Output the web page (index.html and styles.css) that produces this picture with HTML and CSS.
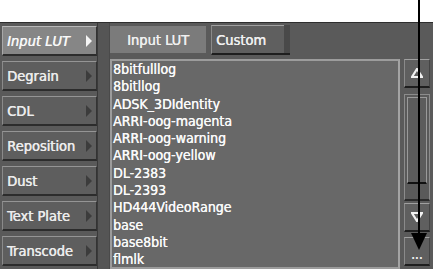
FILE: index.html
```html
<!DOCTYPE html>
<html lang="en">
<head>
  <meta charset="UTF-8">
  <title>Input LUT</title>
  <link rel="stylesheet" href="styles.css">
</head>
<body>
  <div class="top"></div>
  <div class="panel">
    <div class="menu">
      <div class="item active">Input LUT <span class="arrow"></span></div>
      <div class="item">Degrain <span class="arrow"></span></div>
      <div class="item">CDL <span class="arrow"></span></div>
      <div class="item">Reposition <span class="arrow"></span></div>
      <div class="item">Dust <span class="arrow"></span></div>
      <div class="item">Text Plate <span class="arrow"></span></div>
      <div class="item">Transcode <span class="arrow"></span></div>
    </div>
    <div class="divider"></div>
    <div class="main">
      <div class="tabs">
        <div class="tab selected">Input LUT</div>
        <div class="tab custom">Custom</div>
        <div class="tab-edge"></div>
      </div>
      <div class="body">
        <div class="list">
          <div>8bitfulllog</div>
          <div>8bitllog</div>
          <div>ADSK_3DIdentity</div>
          <div>ARRI-oog-magenta</div>
          <div>ARRI-oog-warning</div>
          <div>ARRI-oog-yellow</div>
          <div>DL-2383</div>
          <div>DL-2393</div>
          <div>HD444VideoRange</div>
          <div>base</div>
          <div>base8bit</div>
          <div>flmlk</div>
        </div>
        <div class="scroll">
          <div class="sbtn up">
            <svg width="12" height="10" viewBox="0 0 12 10"><path d="M6 1 L11 9 L1 9 Z" fill="none" stroke="#f2f2f2" stroke-width="2.2" stroke-linejoin="miter"/></svg>
          </div>
          <div class="track"><div class="thumb"></div></div>
          <div class="sbtn down">
            <svg width="12" height="10" viewBox="0 0 12 10"><path d="M1 1 L11 1 L6 9 Z" fill="none" stroke="#f2f2f2" stroke-width="2.2" stroke-linejoin="miter"/></svg>
          </div>
          <div class="sbtn more">...</div>
        </div>
      </div>
    </div>
  </div>

  <svg class="pointer" width="20" height="252" viewBox="0 0 20 252">
    <line x1="10" y1="0" x2="10" y2="236" stroke="#000" stroke-width="2"/>
    <path d="M2 233 L18 233 L10 250 Z" fill="#000"/>
  </svg>
</body>
</html>
```

FILE: styles.css
```css
body {
  margin: 0;
  width: 433px;
  height: 269px;
  overflow: hidden;
  position: relative;
  background: #fff;
  font-family: "DejaVu Sans Condensed", "DejaVu Sans", sans-serif;
}
.top {
  height: 22px;
  background: #fff;
  border-bottom: 1px solid #2e2e2e;
}
.panel {
  display: flex;
  height: 246px;
  background: #5a5a5a;
}
.menu {
  width: 95px;
  padding: 3px 0 0 2px;
  display: flex;
  flex-direction: column;
  gap: 5px;
}
.item {
  height: 27px;
  display: flex;
  align-items: center;
  justify-content: space-between;
  padding: 0 4px 0 4px;
  background: #5e5e5e;
  border-top: 1px solid #959595;
  border-left: 1px solid #8a8a8a;
  border-bottom: 2px solid #2c2c2c;
  border-right: 1px solid #333;
  color: #ececec;
  font-size: 14.5px;
  text-shadow: 0.5px 0 0 #ececec;
}
.item.active {
  background: #868686;
  border-top-color: #b8b8b8;
  border-left-color: #a8a8a8;
  font-style: italic;
  color: #fafafa;
}
.arrow {
  width: 0;
  height: 0;
  border-top: 6px solid transparent;
  border-bottom: 6px solid transparent;
  border-left: 6px solid #3c3c3c;
}
.item.active .arrow {
  border-left-color: #f4f4f4;
}
.divider {
  width: 11px;
  background: #555;
  border-left: 1px solid #3a3a3a;
  border-right: 1px solid #4a4a4a;
}
.main {
  flex: 1;
  display: flex;
  flex-direction: column;
  padding: 3px 3px 0 0;
}
.tabs {
  display: flex;
  height: 31px;
  gap: 5px;
}
.tab {
  height: 27px;
  display: flex;
  align-items: center;
  color: #f0f0f0;
  font-size: 14.5px;
  text-shadow: 0.4px 0 0 #f0f0f0;
}
.tab.selected {
  width: 96px;
  justify-content: center;
  background: #7b7b7b;
}
.tab.custom {
  width: 68px;
  padding-left: 4px;
  background: #5f5f5f;
  border-top: 1px solid #a0a0a0;
  border-left: 1px solid #8a8a8a;
  border-bottom: 2px solid #1e1e1e;
  margin-top: -1px;
}
.tab-edge {
  width: 6px;
  height: 28px;
  margin-left: -5px;
  margin-top: -1px;
  background: #494949;
  border-bottom: 2px solid #1e1e1e;
}
.body {
  display: flex;
  gap: 4px;
  margin-top: 3px;
  flex: 1;
}
.list {
  width: 286px;
  height: 206px;
  background: #686868;
  border: 2px solid #9c9c9c;
  border-right-color: #a4a4a4;
  color: #fafafa;
  font-size: 14px;
  line-height: 17.3px;
  text-shadow: 0.3px 0 0 #fafafa;
  overflow: hidden;
}
.list div {
  padding-left: 1px;
}
.scroll {
  width: 26px;
  display: flex;
  flex-direction: column;
}
.sbtn {
  height: 26px;
  display: flex;
  align-items: center;
  justify-content: center;
  background: #5f5f5f;
  border-top: 1px solid #a0a0a0;
  border-left: 1px solid #8a8a8a;
  border-right: 1px solid #444;
  border-bottom: 2px solid #1e1e1e;
  color: #eee;
}
.track {
  margin-top: 6px;
  height: 100px;
  background: #5a5a5a;
  border: 1px solid #8c8c8c;
  border-bottom: 2px solid #2a2a2a;
  padding: 2px;
}
.thumb {
  height: 84px;
  border: 1px solid #9a9a9a;
  border-bottom: 2px solid #111;
  background: #5c5c5c;
}
.sbtn.down {
  margin-top: 2px;
}
.sbtn.more {
  margin-top: 5px;
  height: 29px;
  font-size: 11px;
  font-weight: bold;
  align-items: flex-end;
  padding-bottom: 2px;
  box-sizing: border-box;
}
.pointer {
  position: absolute;
  left: 409px;
  top: 0;
}
```
